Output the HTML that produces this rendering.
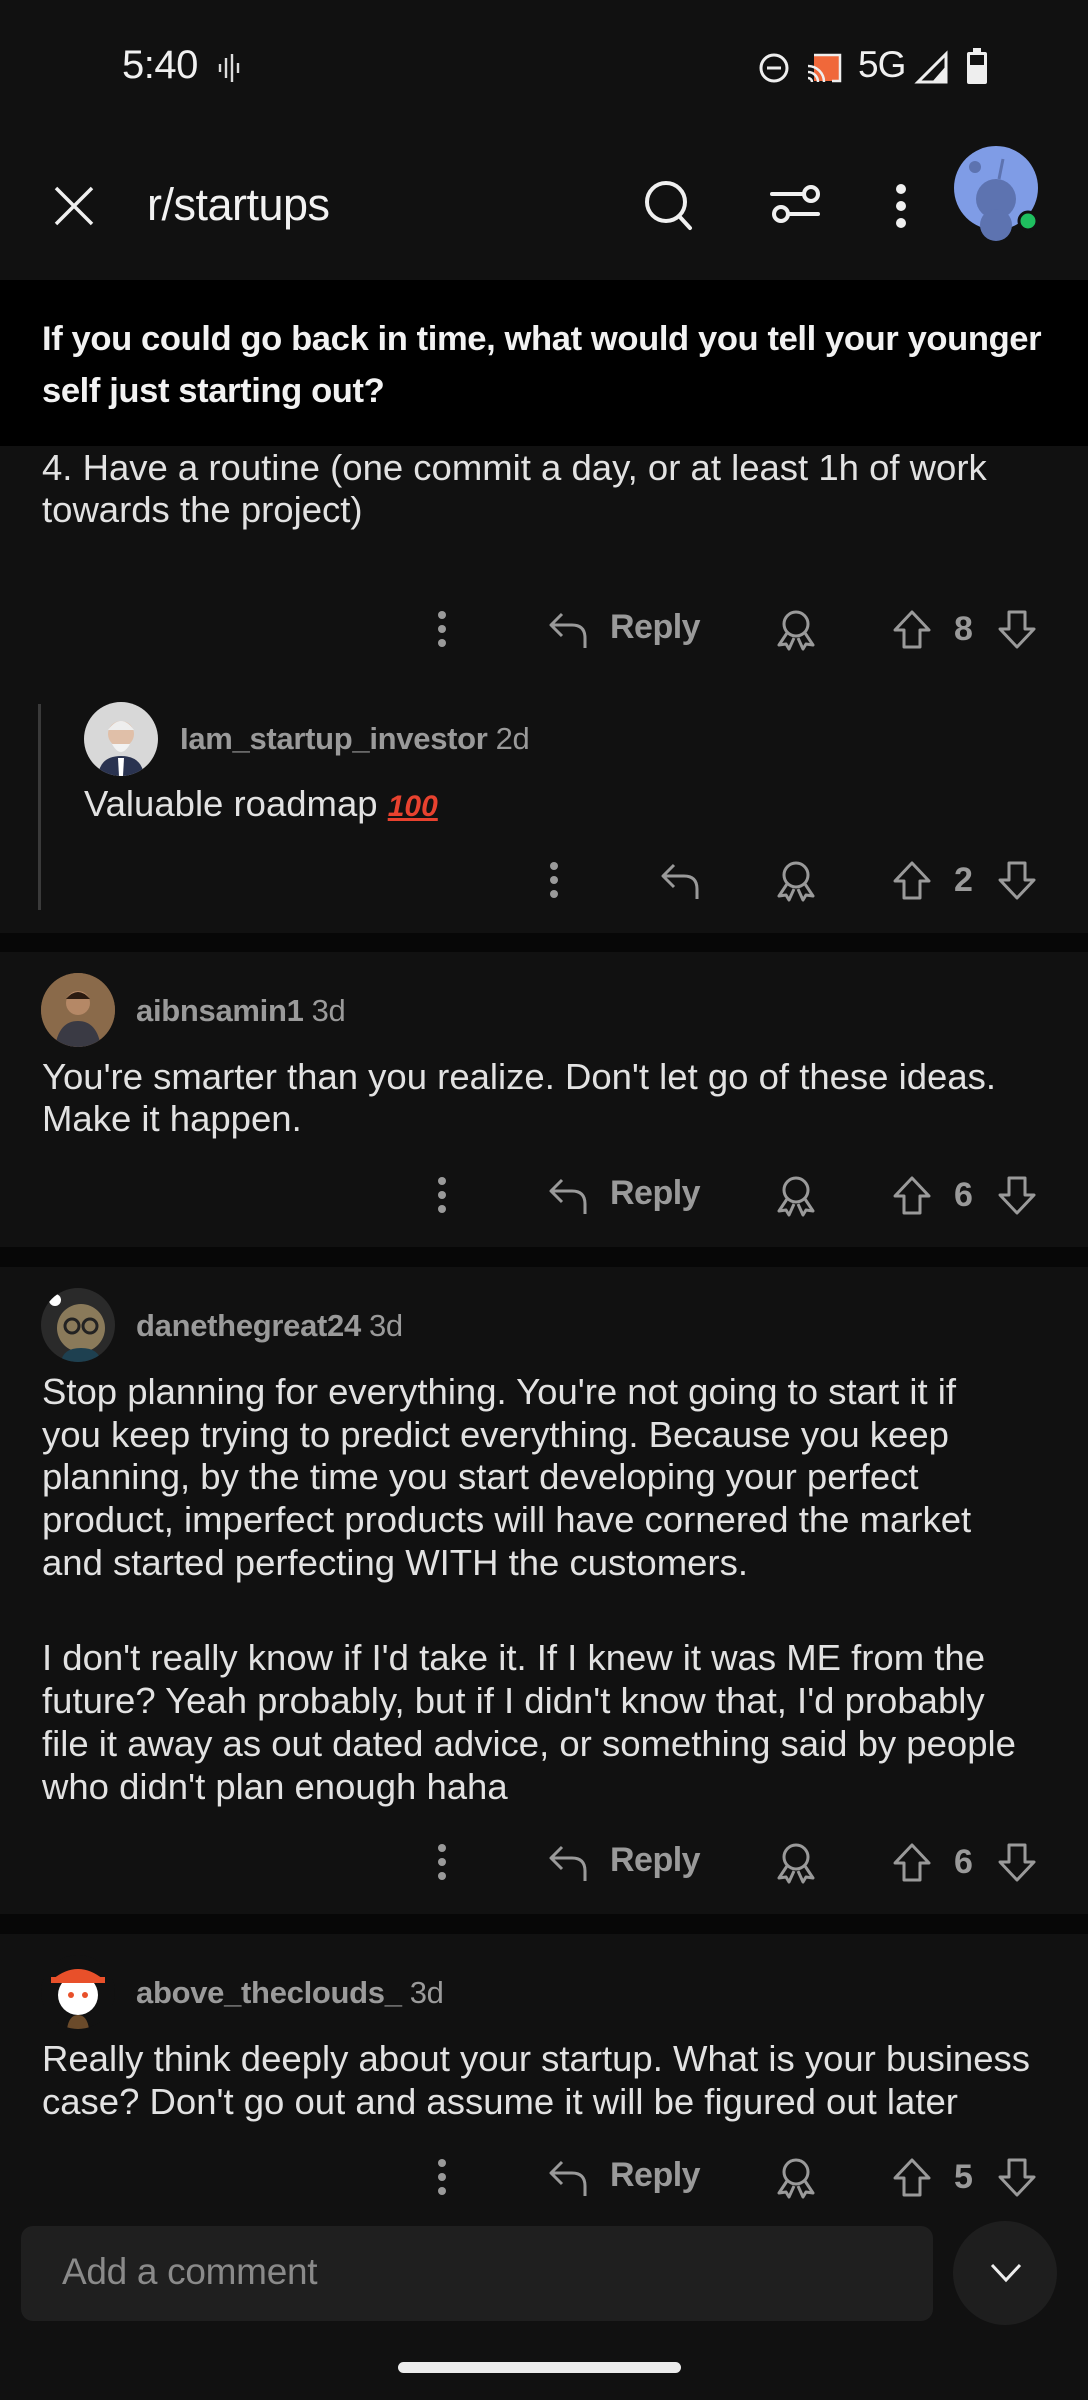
<!DOCTYPE html>
<html><head><meta charset="utf-8">
<style>
*{margin:0;padding:0;box-sizing:border-box}
body{width:1088px;height:2400px;background:#111111;position:relative;overflow:hidden;font-family:"Liberation Sans","Noto Sans CJK SC",sans-serif;color:#e6e6e6}
.a{position:absolute;white-space:nowrap}
.t{position:absolute;left:42px;font-size:36.5px;line-height:43px;color:#e2e2e2;white-space:nowrap;letter-spacing:0}
.name{position:absolute;font-size:31px;color:#9a9a9a;font-weight:bold;white-space:nowrap;letter-spacing:-0.3px}
.name span{font-weight:normal;margin-left:8px}
.sep{position:absolute;left:0;width:1088px;background:#070707}
.av{position:absolute;width:74px;height:74px;border-radius:50%;overflow:hidden}
svg{position:absolute;overflow:visible}
.rp{position:absolute;font-size:34px;color:#9a9a9a;font-weight:bold;letter-spacing:-0.5px}
.cnt{position:absolute;font-size:34px;color:#9a9a9a;font-weight:bold}
</style></head><body>

<!-- status bar -->
<div class="a" style="left:122px;top:43px;font-size:40px;color:#f0f0f0;letter-spacing:-0.5px">5:40</div>
<svg style="left:218px;top:54px" width="24" height="28" viewBox="0 0 24 28"><g stroke="#ddd" stroke-width="2.4"><line x1="2" y1="10" x2="2" y2="18"/><line x1="8" y1="4" x2="8" y2="24"/><line x1="14" y1="0" x2="14" y2="28"/><line x1="20" y1="9" x2="20" y2="19"/></g></svg>
<svg style="left:758px;top:52px" width="32" height="32" viewBox="0 0 32 32"><circle cx="16" cy="16" r="13" fill="none" stroke="#eee" stroke-width="3"/><line x1="9" y1="16" x2="23" y2="16" stroke="#eee" stroke-width="3"/></svg>
<svg style="left:806px;top:52px" width="38" height="32" viewBox="0 0 38 32"><rect x="8" y="3" width="26" height="26" fill="#f0683a"/><path d="M8 3h26v26H26" fill="none" stroke="#eee" stroke-width="2.5"/><path d="M2 14a16 16 0 0 1 16 16M2 20a10 10 0 0 1 10 10M2 26a4 4 0 0 1 4 4" fill="none" stroke="#eee" stroke-width="2.5"/></svg>
<div class="a" style="left:858px;top:44px;font-size:37px;color:#f0f0f0;letter-spacing:-1px">5G</div>
<svg style="left:916px;top:52px" width="32" height="32" viewBox="0 0 32 32"><path d="M30 2V30H2Z" fill="none" stroke="#eee" stroke-width="3"/><path d="M30 14V30H16Z" fill="#eee"/></svg>
<svg style="left:966px;top:48px" width="22" height="36" viewBox="0 0 22 36"><rect x="7" y="0" width="8" height="4" fill="#eee"/><rect x="1" y="4" width="20" height="32" rx="2" fill="#eee"/><rect x="4" y="7" width="14" height="10" fill="#111"/></svg>

<!-- header -->
<svg style="left:54px;top:186px" width="40" height="40" viewBox="0 0 40 40"><path d="M2 2L38 38M38 2L2 38" stroke="#f0f0f0" stroke-width="3.5"/></svg>
<div class="a" style="left:147px;top:179px;font-size:45px;color:#f2f2f2;letter-spacing:-0.5px">r/startups</div>
<svg style="left:644px;top:180px" width="52" height="52" viewBox="0 0 52 52"><circle cx="22" cy="22" r="19" fill="none" stroke="#f0f0f0" stroke-width="4"/><line x1="35" y1="36" x2="46" y2="48" stroke="#f0f0f0" stroke-width="4" stroke-linecap="round"/></svg>
<svg style="left:770px;top:182px" width="52" height="44" viewBox="0 0 52 44"><line x1="2" y1="12" x2="34" y2="12" stroke="#f0f0f0" stroke-width="4" stroke-linecap="round"/><circle cx="41" cy="12" r="7" fill="none" stroke="#f0f0f0" stroke-width="4"/><line x1="18" y1="32" x2="48" y2="32" stroke="#f0f0f0" stroke-width="4" stroke-linecap="round"/><circle cx="11" cy="32" r="7" fill="none" stroke="#f0f0f0" stroke-width="4"/></svg>
<svg style="left:894px;top:184px" width="14" height="44" viewBox="0 0 14 44"><circle cx="7" cy="5" r="5" fill="#f0f0f0"/><circle cx="7" cy="22" r="5" fill="#f0f0f0"/><circle cx="7" cy="39" r="5" fill="#f0f0f0"/></svg>
<svg style="left:953px;top:145px" width="90" height="90" viewBox="0 0 90 90"><circle cx="43" cy="43" r="42" fill="#7f9ce6"/><circle cx="43" cy="54" r="20" fill="#5d73b0"/><circle cx="43" cy="80" r="16" fill="#5d73b0"/><circle cx="22" cy="22" r="6" fill="#5d73b0"/><path d="M46 34L50 14" stroke="#5d73b0" stroke-width="3"/><circle cx="75" cy="76" r="9" fill="#1fbf5f" stroke="#111" stroke-width="3"/></svg>

<!-- title -->
<div class="a" style="left:0;top:280px;width:1088px;height:166px;background:#000"></div>
<div class="a" style="left:42px;top:313px;font-size:34.6px;line-height:52px;font-weight:bold;color:#f2f2f2;letter-spacing:-0.4px">If you could go back in time, what would you tell your younger<br>self just starting out?</div>

<!-- comment 1 tail -->
<div class="t" style="top:446px">4. Have a routine (one commit a day, or at least 1h of work</div>
<div class="t" style="top:488px">towards the project)</div>

<!-- row 1 y=629 -->
<svg style="left:436px;top:611px" width="12" height="36" viewBox="0 0 12 36"><circle cx="6" cy="4" r="4" fill="#9a9a9a"/><circle cx="6" cy="18" r="4" fill="#9a9a9a"/><circle cx="6" cy="32" r="4" fill="#9a9a9a"/></svg>
<svg style="left:548px;top:610px" width="40" height="40" viewBox="0 0 40 40"><path d="M14 4L3 15L14 26M3 15H24Q37 15 37 28V38" fill="none" stroke="#9a9a9a" stroke-width="3" stroke-linejoin="round"/></svg>
<div class="rp" style="left:610px;top:608px">Reply</div>
<svg style="left:775px;top:609px" width="42" height="42" viewBox="0 0 42 42"><circle cx="21" cy="15" r="12" fill="none" stroke="#9a9a9a" stroke-width="3"/><path d="M12 24L4 36L11 35L14 40L19 29M30 24L38 36L31 35L28 40L23 29" fill="none" stroke="#9a9a9a" stroke-width="3" stroke-linejoin="round"/></svg>
<svg style="left:892px;top:609px" width="40" height="40" viewBox="0 0 40 40"><path d="M20 3L37 21H28V38H12V21H3Z" fill="none" stroke="#9a9a9a" stroke-width="3" stroke-linejoin="round"/></svg>
<div class="cnt" style="left:954px;top:610px">8</div>
<svg style="left:997px;top:610px" width="40" height="40" viewBox="0 0 40 40"><path d="M20 37L37 19H28V2H12V19H3Z" fill="none" stroke="#9a9a9a" stroke-width="3" stroke-linejoin="round"/></svg>

<!-- reply thread -->
<div class="a" style="left:38px;top:704px;width:3px;height:206px;background:#3a3a3a"></div>
<div class="av" style="left:84px;top:702px;background:#d8d8d8"><svg width="74" height="74" viewBox="0 0 74 74" style="position:static"><circle cx="37" cy="32" r="13" fill="#e0bfa8"/><path d="M24 28Q37 10 50 28" fill="#eee"/><path d="M28 42Q37 58 46 42" fill="#f2f2f2"/><path d="M14 74Q16 54 37 54Q58 54 60 74Z" fill="#2a3350"/><path d="M34 56h6l-1 18h-4Z" fill="#fff"/></svg></div>
<div class="name" style="left:180px;top:721px">Iam_startup_investor<span>2d</span></div>
<div class="t" style="left:84px;top:782px">Valuable roadmap <span style="color:#e8422f;font-weight:bold;font-style:italic;text-decoration:underline;font-size:30px">100</span></div>
<!-- row 2 y=880 -->
<svg style="left:548px;top:862px" width="12" height="36" viewBox="0 0 12 36"><circle cx="6" cy="4" r="4" fill="#9a9a9a"/><circle cx="6" cy="18" r="4" fill="#9a9a9a"/><circle cx="6" cy="32" r="4" fill="#9a9a9a"/></svg>
<svg style="left:660px;top:861px" width="40" height="40" viewBox="0 0 40 40"><path d="M14 4L3 15L14 26M3 15H24Q37 15 37 28V38" fill="none" stroke="#9a9a9a" stroke-width="3" stroke-linejoin="round"/></svg>
<svg style="left:775px;top:860px" width="42" height="42" viewBox="0 0 42 42"><circle cx="21" cy="15" r="12" fill="none" stroke="#9a9a9a" stroke-width="3"/><path d="M12 24L4 36L11 35L14 40L19 29M30 24L38 36L31 35L28 40L23 29" fill="none" stroke="#9a9a9a" stroke-width="3" stroke-linejoin="round"/></svg>
<svg style="left:892px;top:860px" width="40" height="40" viewBox="0 0 40 40"><path d="M20 3L37 21H28V38H12V21H3Z" fill="none" stroke="#9a9a9a" stroke-width="3" stroke-linejoin="round"/></svg>
<div class="cnt" style="left:954px;top:861px">2</div>
<svg style="left:997px;top:861px" width="40" height="40" viewBox="0 0 40 40"><path d="M20 37L37 19H28V2H12V19H3Z" fill="none" stroke="#9a9a9a" stroke-width="3" stroke-linejoin="round"/></svg>

<div class="sep" style="top:933px;height:19px"></div>

<!-- aibnsamin1 -->
<div class="av" style="left:41px;top:973px;background:#6b4a30"><svg width="74" height="74" viewBox="0 0 74 74" style="position:static"><rect width="74" height="74" fill="#8a6a4a"/><circle cx="37" cy="30" r="12" fill="#b58866"/><path d="M25 26Q37 12 49 26" fill="#2a1a10"/><path d="M14 74Q18 48 37 48Q56 48 60 74Z" fill="#3a3a44"/></svg></div>
<div class="name" style="left:136px;top:993px">aibnsamin1<span>3d</span></div>
<div class="t" style="top:1055px">You're smarter than you realize. Don't let go of these ideas.</div>
<div class="t" style="top:1097px">Make it happen.</div>
<!-- row y=1195 -->
<svg style="left:436px;top:1177px" width="12" height="36" viewBox="0 0 12 36"><circle cx="6" cy="4" r="4" fill="#9a9a9a"/><circle cx="6" cy="18" r="4" fill="#9a9a9a"/><circle cx="6" cy="32" r="4" fill="#9a9a9a"/></svg>
<svg style="left:548px;top:1176px" width="40" height="40" viewBox="0 0 40 40"><path d="M14 4L3 15L14 26M3 15H24Q37 15 37 28V38" fill="none" stroke="#9a9a9a" stroke-width="3" stroke-linejoin="round"/></svg>
<div class="rp" style="left:610px;top:1174px">Reply</div>
<svg style="left:775px;top:1175px" width="42" height="42" viewBox="0 0 42 42"><circle cx="21" cy="15" r="12" fill="none" stroke="#9a9a9a" stroke-width="3"/><path d="M12 24L4 36L11 35L14 40L19 29M30 24L38 36L31 35L28 40L23 29" fill="none" stroke="#9a9a9a" stroke-width="3" stroke-linejoin="round"/></svg>
<svg style="left:892px;top:1175px" width="40" height="40" viewBox="0 0 40 40"><path d="M20 3L37 21H28V38H12V21H3Z" fill="none" stroke="#9a9a9a" stroke-width="3" stroke-linejoin="round"/></svg>
<div class="cnt" style="left:954px;top:1176px">6</div>
<svg style="left:997px;top:1176px" width="40" height="40" viewBox="0 0 40 40"><path d="M20 37L37 19H28V2H12V19H3Z" fill="none" stroke="#9a9a9a" stroke-width="3" stroke-linejoin="round"/></svg>

<div class="sep" style="top:1247px;height:20px"></div>

<!-- danethegreat24 -->
<div class="av" style="left:41px;top:1288px;background:#2a2a2a"><svg width="74" height="74" viewBox="0 0 74 74" style="position:static"><circle cx="40" cy="40" r="24" fill="#8a7a5a"/><circle cx="31" cy="38" r="7" fill="none" stroke="#222" stroke-width="3"/><circle cx="49" cy="38" r="7" fill="none" stroke="#222" stroke-width="3"/><circle cx="14" cy="12" r="6" fill="#fff"/><path d="M20 74Q22 60 40 60Q58 60 60 74Z" fill="#1e4050"/></svg></div>
<div class="name" style="left:136px;top:1308px">danethegreat24<span>3d</span></div>
<div class="t" style="top:1370px">Stop planning for everything. You're not going to start it if</div>
<div class="t" style="top:1413px">you keep trying to predict everything. Because you keep</div>
<div class="t" style="top:1455px">planning, by the time you start developing your perfect</div>
<div class="t" style="top:1498px">product, imperfect products will have cornered the market</div>
<div class="t" style="top:1541px">and started perfecting WITH the customers.</div>
<div class="t" style="top:1636px">I don't really know if I'd take it. If I knew it was ME from the</div>
<div class="t" style="top:1679px">future? Yeah probably, but if I didn't know that, I'd probably</div>
<div class="t" style="top:1722px">file it away as out dated advice, or something said by people</div>
<div class="t" style="top:1765px">who didn't plan enough haha</div>
<!-- row y=1862 -->
<svg style="left:436px;top:1844px" width="12" height="36" viewBox="0 0 12 36"><circle cx="6" cy="4" r="4" fill="#9a9a9a"/><circle cx="6" cy="18" r="4" fill="#9a9a9a"/><circle cx="6" cy="32" r="4" fill="#9a9a9a"/></svg>
<svg style="left:548px;top:1843px" width="40" height="40" viewBox="0 0 40 40"><path d="M14 4L3 15L14 26M3 15H24Q37 15 37 28V38" fill="none" stroke="#9a9a9a" stroke-width="3" stroke-linejoin="round"/></svg>
<div class="rp" style="left:610px;top:1841px">Reply</div>
<svg style="left:775px;top:1842px" width="42" height="42" viewBox="0 0 42 42"><circle cx="21" cy="15" r="12" fill="none" stroke="#9a9a9a" stroke-width="3"/><path d="M12 24L4 36L11 35L14 40L19 29M30 24L38 36L31 35L28 40L23 29" fill="none" stroke="#9a9a9a" stroke-width="3" stroke-linejoin="round"/></svg>
<svg style="left:892px;top:1842px" width="40" height="40" viewBox="0 0 40 40"><path d="M20 3L37 21H28V38H12V21H3Z" fill="none" stroke="#9a9a9a" stroke-width="3" stroke-linejoin="round"/></svg>
<div class="cnt" style="left:954px;top:1843px">6</div>
<svg style="left:997px;top:1843px" width="40" height="40" viewBox="0 0 40 40"><path d="M20 37L37 19H28V2H12V19H3Z" fill="none" stroke="#9a9a9a" stroke-width="3" stroke-linejoin="round"/></svg>

<div class="sep" style="top:1914px;height:20px"></div>

<!-- above_theclouds_ -->
<div class="av" style="left:41px;top:1955px;background:#111"><svg width="74" height="74" viewBox="0 0 74 74" style="position:static"><circle cx="37" cy="40" r="20" fill="#fff"/><path d="M12 24Q37 4 62 24Z" fill="#e8502a"/><rect x="10" y="22" width="54" height="6" fill="#e8502a"/><circle cx="30" cy="40" r="3" fill="#e8502a"/><circle cx="44" cy="40" r="3" fill="#e8502a"/><path d="M26 74Q28 60 37 60Q46 60 48 74Z" fill="#6a4a2a"/></svg></div>
<div class="name" style="left:136px;top:1975px">above_theclouds_<span>3d</span></div>
<div class="t" style="top:2037px">Really think deeply about your startup. What is your business</div>
<div class="t" style="top:2080px">case? Don't go out and assume it will be figured out later</div>
<!-- row y=2177 -->
<svg style="left:436px;top:2159px" width="12" height="36" viewBox="0 0 12 36"><circle cx="6" cy="4" r="4" fill="#9a9a9a"/><circle cx="6" cy="18" r="4" fill="#9a9a9a"/><circle cx="6" cy="32" r="4" fill="#9a9a9a"/></svg>
<svg style="left:548px;top:2158px" width="40" height="40" viewBox="0 0 40 40"><path d="M14 4L3 15L14 26M3 15H24Q37 15 37 28V38" fill="none" stroke="#9a9a9a" stroke-width="3" stroke-linejoin="round"/></svg>
<div class="rp" style="left:610px;top:2156px">Reply</div>
<svg style="left:775px;top:2157px" width="42" height="42" viewBox="0 0 42 42"><circle cx="21" cy="15" r="12" fill="none" stroke="#9a9a9a" stroke-width="3"/><path d="M12 24L4 36L11 35L14 40L19 29M30 24L38 36L31 35L28 40L23 29" fill="none" stroke="#9a9a9a" stroke-width="3" stroke-linejoin="round"/></svg>
<svg style="left:892px;top:2157px" width="40" height="40" viewBox="0 0 40 40"><path d="M20 3L37 21H28V38H12V21H3Z" fill="none" stroke="#9a9a9a" stroke-width="3" stroke-linejoin="round"/></svg>
<div class="cnt" style="left:954px;top:2158px">5</div>
<svg style="left:997px;top:2158px" width="40" height="40" viewBox="0 0 40 40"><path d="M20 37L37 19H28V2H12V19H3Z" fill="none" stroke="#9a9a9a" stroke-width="3" stroke-linejoin="round"/></svg>

<!-- bottom input -->
<div class="a" style="left:21px;top:2226px;width:912px;height:95px;background:#1f1f1f;border-radius:12px"></div>
<div class="a" style="left:62px;top:2251px;font-size:37px;color:#8a8a8a;letter-spacing:-0.3px">Add a comment</div>
<div class="a" style="left:953px;top:2221px;width:104px;height:104px;border-radius:50%;background:#1e1e1e"></div>
<svg style="left:990px;top:2263px" width="32" height="20" viewBox="0 0 32 20"><path d="M2 2L16 17L30 2" fill="none" stroke="#eee" stroke-width="3"/></svg>
<div class="a" style="left:398px;top:2362px;width:283px;height:11px;border-radius:6px;background:#ececec"></div>
</body></html>
